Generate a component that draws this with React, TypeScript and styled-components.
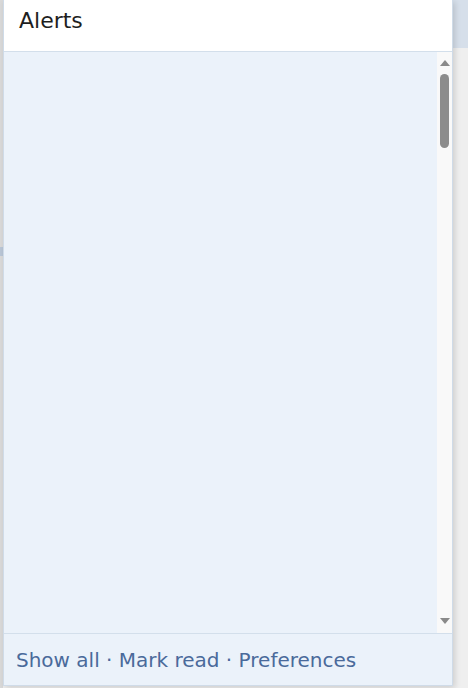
import React from 'react';
import styled, { createGlobalStyle } from 'styled-components';

const GlobalStyle = createGlobalStyle`
  html, body {
    margin: 0;
    padding: 0;
  }
  body {
    font-family: "DejaVu Sans", Verdana, sans-serif;
    background: #efefef;
  }
  * {
    box-sizing: border-box;
  }
`;

const Page = styled.div`
  position: relative;
  width: 468px;
  height: 688px;
  overflow: hidden;
`;

// the forum page that sits behind the alerts menu
const Backdrop = styled.div`
  height: 100%;
  display: flex;
  flex-direction: column;
  background: #efefef;
  border-left: 3px solid #d9d9d9;
`;

const TopBar = styled.div`
  height: 48px;
  background: #d6dfea;
`;

const Main = styled.div`
  flex: 1;
  display: flex;
  flex-direction: column;
  justify-content: space-between;
  padding: 199px 0 0 16px;
`;

const NavTab = styled.div`
  width: 40px;
  height: 9px;
  margin-left: -19px;
  background: #b9c6d6;
`;

const BlockHeading = styled.h3`
  margin: 0 0 -20px;
  font-size: 20px;
  font-weight: normal;
  letter-spacing: 1px;
  color: #2b2b2b;
  text-transform: uppercase;
`;

// alerts menu
const Menu = styled.div`
  position: absolute;
  top: 0;
  left: 3px;
  width: 450px;
  height: 686px;
  display: flex;
  flex-direction: column;
  border: 1px solid #cfdbe8;
  border-top: none;
  background: #ebf2fa;
  box-shadow: 2px 2px 6px rgba(0, 0, 0, 0.14);
`;

const MenuHeader = styled.div`
  height: 52px;
  padding: 7px 15px 0;
  background: #fff;
  border-bottom: 1px solid #d3dfeb;
`;

const MenuTitle = styled.h3`
  margin: 0;
  font-size: 22px;
  line-height: 27px;
  font-weight: normal;
  color: #1e1e1e;
`;

const MenuBody = styled.div`
  flex: 1;
  display: flex;
`;

const AlertList = styled.ol`
  flex: 1;
  margin: 0;
  padding: 0;
  list-style: none;
`;

const Scrollbar = styled.div`
  width: 15px;
  display: flex;
  flex-direction: column;
  align-items: center;
  padding: 8px 0 9px;
  background: #f9f9f9;
`;

const Arrow = styled.div<{ $dir: 'up' | 'down' }>`
  width: 0;
  height: 0;
  border-left: 5px solid transparent;
  border-right: 5px solid transparent;
  ${({ $dir }) =>
    $dir === 'up'
      ? 'border-bottom: 6px solid #8a8a8a;'
      : 'border-top: 6px solid #8a8a8a; margin-top: auto;'}
`;

const Thumb = styled.div`
  width: 9px;
  height: 74px;
  margin-top: 8px;
  border-radius: 5px;
  background: #8c8c8c;
`;

const MenuFooter = styled.div`
  height: 52px;
  padding: 14px 12px 0;
  border-top: 1px solid #d3dfeb;
  font-size: 20px;
  line-height: 24px;
  color: #4a6a9b;
`;

const FooterLink = styled.a`
  color: #4a6a9b;
  text-decoration: none;
`;

const links = ['Show all', 'Mark read', 'Preferences'];

export default function App() {
  return (
    <>
      <GlobalStyle />
      <Page>
        <Backdrop>
          <TopBar />
          <Main>
            <NavTab />
            <BlockHeading>Latest posts</BlockHeading>
          </Main>
        </Backdrop>
        <Menu>
          <MenuHeader>
            <MenuTitle>Alerts</MenuTitle>
          </MenuHeader>
          <MenuBody>
            <AlertList />
            <Scrollbar>
              <Arrow $dir="up" />
              <Thumb />
              <Arrow $dir="down" />
            </Scrollbar>
          </MenuBody>
          <MenuFooter>
            {links.map((label, i) => (
              <React.Fragment key={label}>
                {i > 0 && ' · '}
                <FooterLink href="#">{label}</FooterLink>
              </React.Fragment>
            ))}
          </MenuFooter>
        </Menu>
      </Page>
    </>
  );
}
